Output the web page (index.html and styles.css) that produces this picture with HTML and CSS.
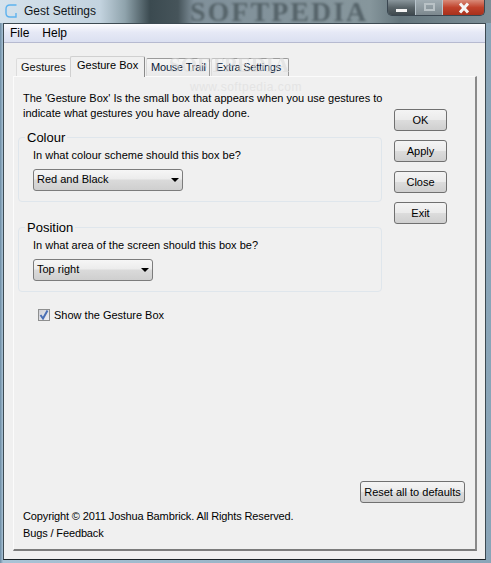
FILE: index.html
```html
<!DOCTYPE html>
<html lang="en">
<head>
    <meta charset="UTF-8">
    <title>Gest Settings</title>
    <link rel="stylesheet" href="styles.css">
</head>
<body>
    <div class="window">
        <div class="titlebar">
            <svg class="app-icon" width="12" height="14" viewBox="0 0 12 14">
                <path d="M11.5 1 H5 Q1 1 1 5 V9 Q1 13 5 13 H11 V9" fill="none" stroke="#5db2ee" stroke-width="1.4"/>
            </svg>
            <span class="title">Gest Settings</span>
            <span class="title-mark">SOFTPEDIA</span>
            <div class="win-buttons">
                <div class="win-btn min"><span class="min-glyph"></span></div>
                <div class="win-btn max"><span class="max-glyph"></span></div>
                <div class="win-btn close"><svg width="14" height="12" viewBox="0 0 14 12"><path d="M3 1.5 L11 10.5 M11 1.5 L3 10.5" stroke="#f4f4f4" stroke-width="3"/></svg></div>
            </div>
        </div>
        <div class="client">
            <div class="menubar">
                <span>File</span>
                <span>Help</span>
            </div>
            <div class="tabs">
                <div class="tab first">Gestures</div>
                <div class="tab active">Gesture Box</div>
                <div class="tab trail">Mouse Trail</div>
                <div class="tab extra">Extra Settings</div>
                <span class="tab-mark">SOFTPEDIA</span>
            </div>
            <div class="panel">
                <span class="site-mark">www.softpedia.com</span>
                <div class="main">
                    <div class="content">
                        <p class="intro">The 'Gesture Box' Is the small box that appears when you use gestures to<br>indicate what gestures you have already done.</p>
                        <fieldset class="group">
                            <legend>Colour</legend>
                            <p>In what colour scheme should this box be?</p>
                            <div class="select colour-select">Red and Black<span class="arrow"></span></div>
                        </fieldset>
                        <fieldset class="group position">
                            <legend>Position</legend>
                            <p>In what area of the screen should this box be?</p>
                            <div class="select position-select">Top right<span class="arrow"></span></div>
                        </fieldset>
                        <label class="check">
                            <span class="checkbox">
                                <svg width="10" height="10" viewBox="0 0 10 10"><path d="M1.5 5 L4 8.5 L8.5 0.5" fill="none" stroke="#4a6fb5" stroke-width="2"/></svg>
                            </span>
                            Show the Gesture Box
                        </label>
                    </div>
                    <div class="side">
                        <button class="btn">OK</button>
                        <button class="btn">Apply</button>
                        <button class="btn">Close</button>
                        <button class="btn">Exit</button>
                    </div>
                </div>
                <div class="reset-row">
                    <button class="btn reset">Reset all to defaults</button>
                </div>
                <div class="footer">
                    <div>Copyright © 2011 Joshua Bambrick. All Rights Reserved.</div>
                    <div>Bugs / Feedback</div>
                </div>
            </div>
        </div>
    </div>
</body>
</html>
```

FILE: styles.css
```css
html, body {
    margin: 0;
    height: 100%;
}
body {
    font-family: "Liberation Sans", Arial, sans-serif;
    font-size: 11px;
    color: #000;
    overflow: hidden;
}
.window {
    width: 491px;
    height: 563px;
    box-sizing: border-box;
    padding: 0 3px 3px 3px;
    display: flex;
    flex-direction: column;
    overflow: hidden;
    background: linear-gradient(90deg, #6c8ba3 0, #a9c3d6 3px, #8aa5b8 100%);
}
.titlebar {
    height: 23px;
    margin: 0 -3px;
    padding: 0 0 2px 5px;
    box-sizing: border-box;
    display: flex;
    align-items: center;
    position: relative;
    background: linear-gradient(90deg, #d5e2ec 0, #c3d3df 100px, #8fa3ac 125px, #3b4a50 150px, #46545a 178px, #80909a 194px, #86969c 370px, #64757c 400px, #7d8f98 491px);
}
.app-icon {
    margin-right: 7px;
}
.title {
    font-size: 12px;
    color: #101418;
}
.title-mark {
    position: absolute;
    left: 190px;
    top: 0;
    font-family: "Liberation Serif", serif;
    font-weight: bold;
    font-size: 28px;
    line-height: 23px;
    letter-spacing: 2px;
    color: #56646a;
    filter: blur(1px);
    white-space: nowrap;
}
.win-buttons {
    position: absolute;
    right: 6px;
    top: 0;
    display: flex;
    height: 15px;
    border: 1px solid #3a4650;
    border-top: 0;
    border-radius: 0 0 5px 5px;
    overflow: hidden;
}
.win-btn {
    display: flex;
    align-items: center;
    justify-content: center;
    border-right: 1px solid #b8c4cc;
}
.min {
    width: 27px;
    background: linear-gradient(#8a969c, #596469 50%, #3e484d);
}
.max {
    width: 26px;
    background: linear-gradient(#a1adb3, #7c888e);
}
.close {
    width: 41px;
    border-right: 0;
    background: linear-gradient(#d98a78, #c0422b 50%, #a8301c);
}
.min-glyph {
    display: block;
    width: 11px;
    height: 3px;
    margin-top: 6px;
    background: #f4f4f4;
}
.max-glyph {
    display: block;
    width: 7px;
    height: 4px;
    border: 2px solid #b9c2c6;
    margin-top: -1px;
}
.client {
    flex: 1;
    display: flex;
    flex-direction: column;
    min-height: 0;
    margin-right: 2px;
    border: 1px solid #3d4a52;
    border-bottom-color: #1c2226;
    background: #f0f0f0;
}
.menubar {
    height: 19px;
    box-sizing: border-box;
    display: flex;
    align-items: center;
    gap: 13px;
    padding-left: 6px;
    font-size: 12px;
    border-bottom: 1px solid #b6bad0;
    background: linear-gradient(#fdfdff, #e6e9f6 45%, #dbe0f1);
}
.tabs {
    display: flex;
    align-items: flex-end;
    height: 33px;
    padding-left: 12px;
    position: relative;
    z-index: 1;
}
.tab {
    height: 18px;
    box-sizing: border-box;
    padding: 2px 0 0 4px;
    margin-right: 1px;
    white-space: nowrap;
    border: 1px solid #9b9b9b;
    border-bottom: 0;
    border-left-color: #d9d9d9;
    border-radius: 2px 2px 0 0;
    background: linear-gradient(#f6f6f6, #e9e9e9);
    color: #0a1a38;
}
.tab.first {
    width: 55px;
    border-color: #dcdcdc;
    background: #f3f3f3;
    color: #101010;
}
.tab.active {
    height: 21px;
    width: 75px;
    margin: 0 1px 0 -2px;
    padding-top: 2px;
    padding-left: 6px;
    background: #f0f0f0;
    border-color: #d0d0d0;
    border-right-color: #8a8a8a;
    position: relative;
    top: 1px;
    color: #000;
}
.tab.trail {
    width: 64px;
    letter-spacing: -0.2px;
}
.tab.extra {
    width: 78px;
    letter-spacing: -0.25px;
}
.tab-mark {
    position: absolute;
    left: 165px;
    top: 10px;
    font-family: "Liberation Serif", serif;
    font-weight: bold;
    font-size: 21px;
    color: #dcdcdc;
    opacity: 0.6;
    white-space: nowrap;
    pointer-events: none;
}
.panel {
    position: relative;
    margin: 0 8px 8px 9px;
    flex: 1;
    min-height: 0;
    display: flex;
    flex-direction: column;
    box-sizing: border-box;
    padding: 0 0 7px 9px;
    border: 1px solid #e2e2e2;
    border-left-color: #fbfbfb;
    border-top-color: #fbfbfb;
    border-right: 2px solid #8a8a8a;
    border-bottom: 2px solid #7c7c7c;
    background: #f0f0f0;
}
.site-mark {
    position: absolute;
    left: 176px;
    top: 3px;
    font-size: 12px;
    color: #e4e4e4;
    letter-spacing: 0.5px;
}
.main {
    display: flex;
    flex: 1;
    min-height: 0;
}
.content {
    width: 361px;
}
.intro {
    margin: 14px 0 0 0;
    line-height: 15px;
    white-space: nowrap;
    position: relative;
}
.group {
    width: 364px;
    box-sizing: border-box;
    height: 72px;
    margin: 9px 0 0 -5px;
    padding: 0 0 0 14px;
    border: 1px solid #dfe6ec;
    border-radius: 4px;
    min-width: 0;
}
.group.position {
    margin-top: 18px;
}
.group legend {
    font-size: 13px;
    line-height: 15px;
    padding: 0 2px;
    margin-left: -8px;
}
.group p {
    margin: 3px 0 7px 0;
    line-height: 14px;
}
.select {
    height: 22px;
    box-sizing: border-box;
    padding: 3px 0 0 3px;
    position: relative;
    border: 1px solid #7c7c7c;
    border-radius: 3px;
    background: linear-gradient(#f6f6f6, #ececec 45%, #dadada 50%, #cfcfcf);
}
.colour-select {
    width: 150px;
}
.position-select {
    width: 120px;
}
.arrow {
    position: absolute;
    right: 3px;
    top: 8px;
    width: 0;
    height: 0;
    border: 4px solid transparent;
    border-top: 4px solid #000;
    border-bottom: 0;
}
.check {
    display: flex;
    align-items: center;
    gap: 4px;
    margin: 17px 0 0 15px;
}
.checkbox {
    width: 12px;
    height: 12px;
    box-sizing: border-box;
    display: flex;
    align-items: center;
    justify-content: center;
    border: 1px solid #8e8f8f;
    background: linear-gradient(135deg, #cfd0d6, #f0f0f4);
}
.side {
    display: flex;
    flex-direction: column;
    gap: 9px;
    padding: 32px 0 0 10px;
}
.btn {
    width: 53px;
    height: 22px;
    padding: 0;
    font-family: inherit;
    font-size: 11px;
    color: #000;
    border: 1px solid #707070;
    border-radius: 3px;
    background: linear-gradient(#f4f4f4, #ebebeb 48%, #dcdcdc 52%, #cfcfcf);
}
.reset-row {
    display: flex;
    justify-content: flex-end;
    padding-right: 10px;
}
.btn.reset {
    width: 105px;
}
.footer {
    margin-top: 5px;
    line-height: 17px;
    letter-spacing: -0.13px;
}
```
